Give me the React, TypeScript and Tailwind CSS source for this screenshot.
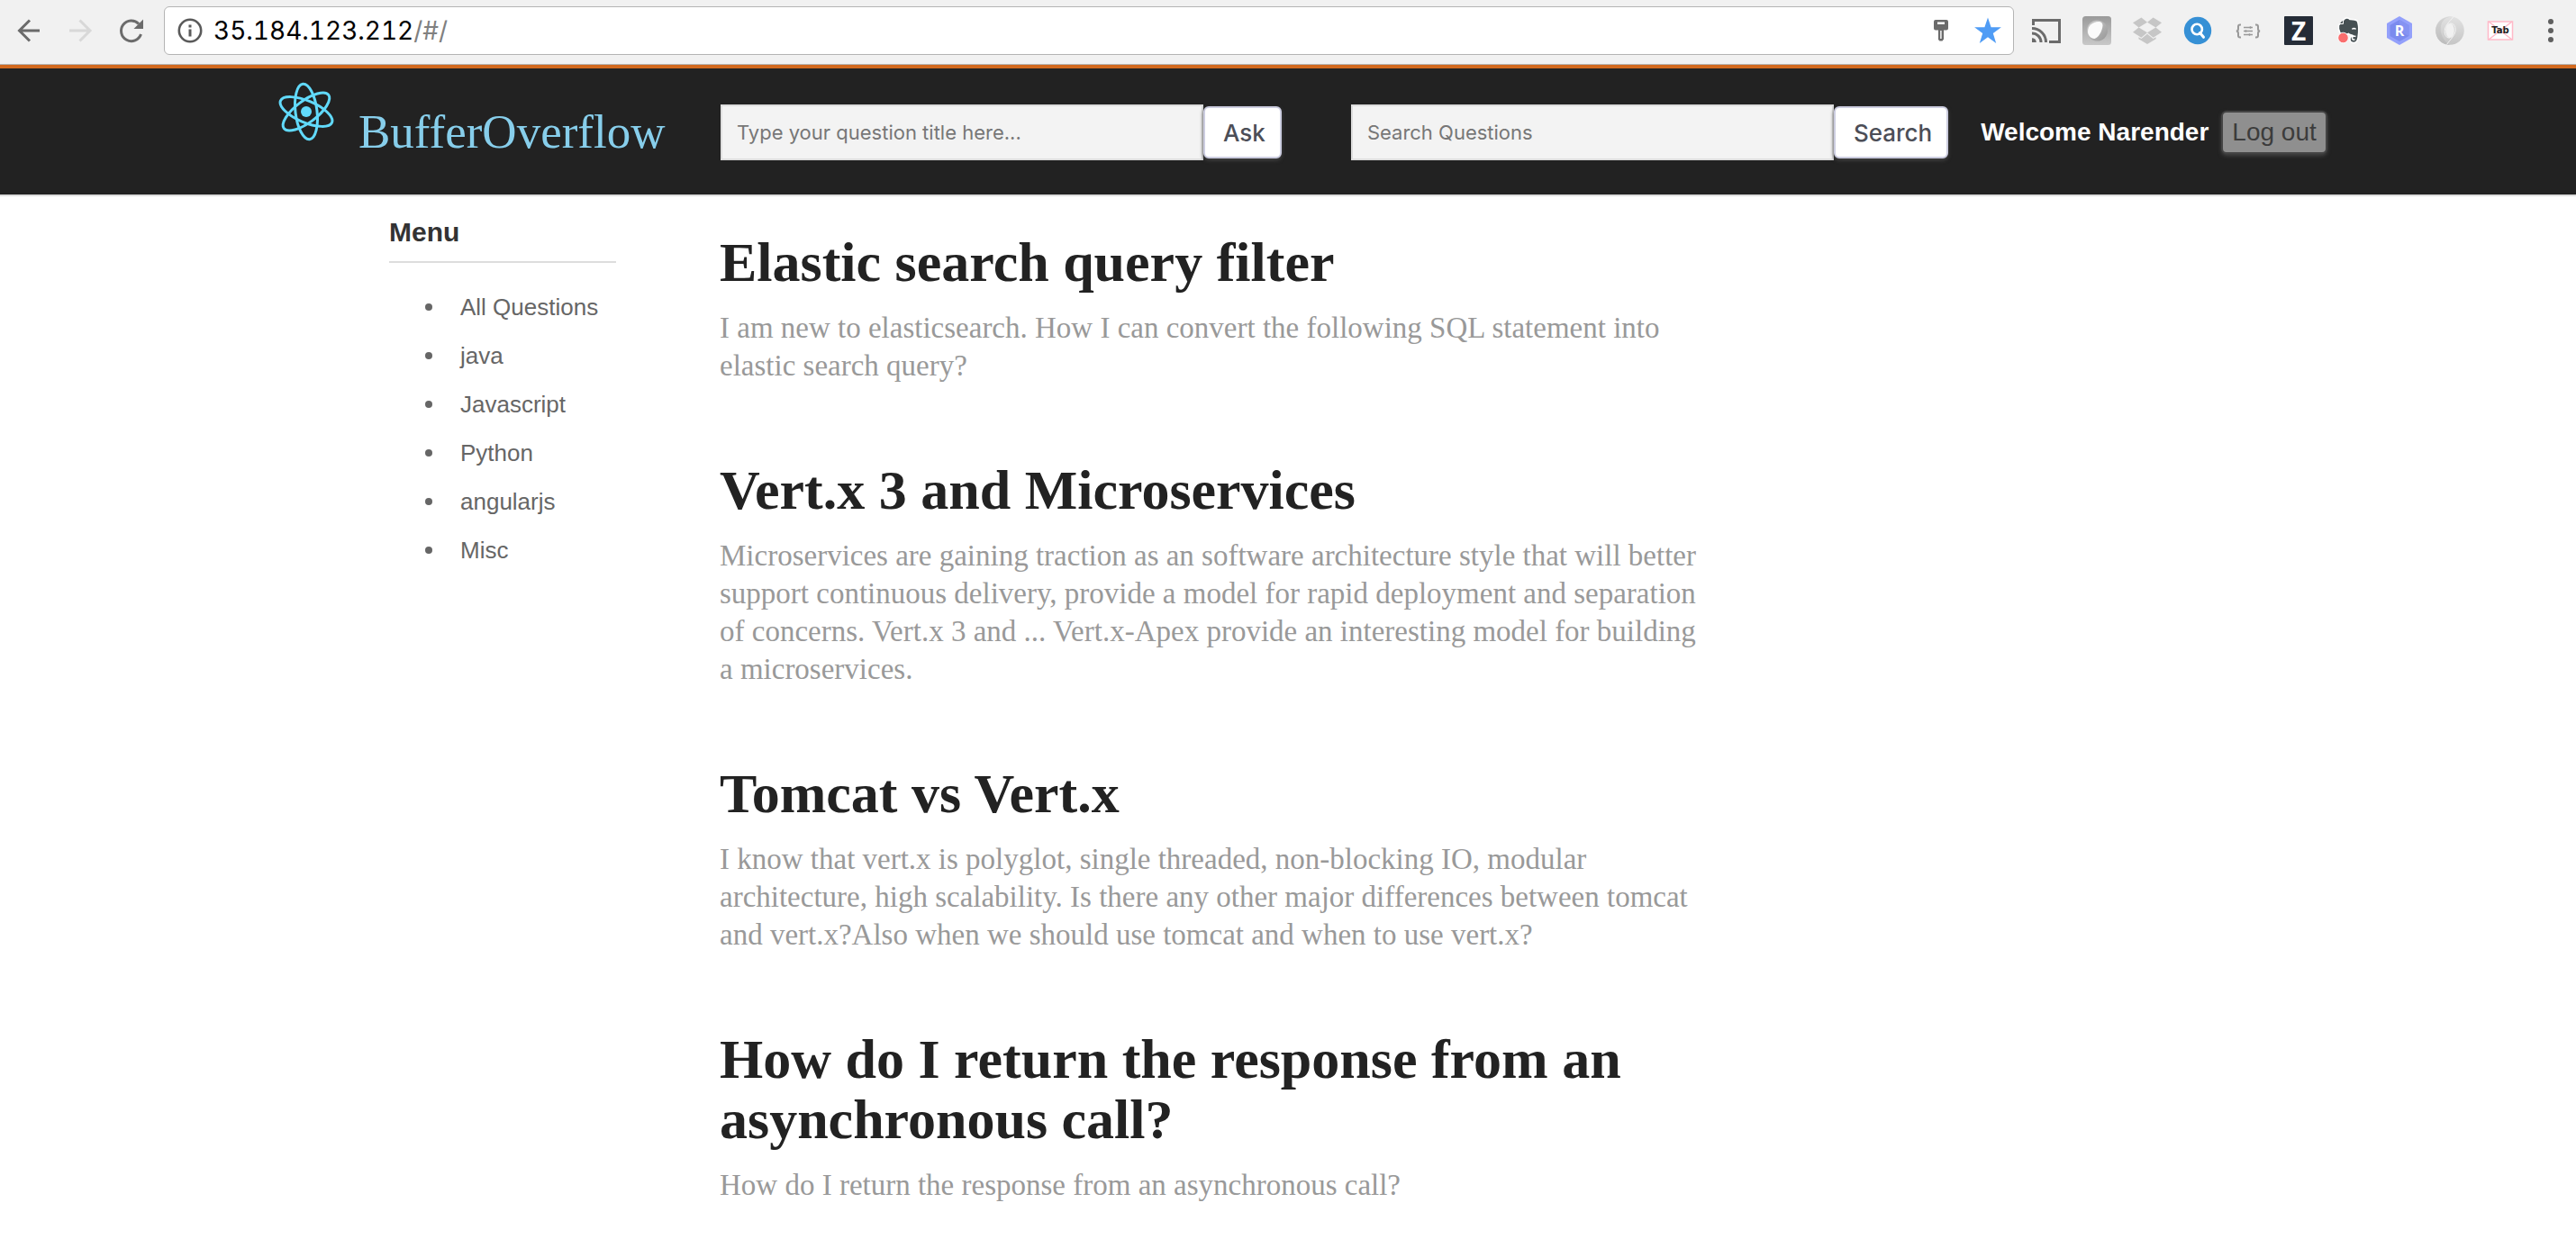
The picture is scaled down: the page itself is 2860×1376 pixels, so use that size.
import React from "react";

const questions = [
  {
    title: "Elastic search query filter",
    body: "I am new to elasticsearch. How I can convert the following SQL statement into elastic search query?",
  },
  {
    title: "Vert.x 3 and Microservices",
    body: "Microservices are gaining traction as an software architecture style that will better support continuous delivery, provide a model for rapid deployment and separation of concerns. Vert.x 3 and ... Vert.x-Apex provide an interesting model for building a microservices.",
  },
  {
    title: "Tomcat vs Vert.x",
    body: "I know that vert.x is polyglot, single threaded, non-blocking IO, modular architecture, high scalability. Is there any other major differences between tomcat and vert.x?Also when we should use tomcat and when to use vert.x?",
  },
  {
    title: "How do I return the response from an asynchronous call?",
    body: "How do I return the response from an asynchronous call?",
  },
];

const categories = ["All Questions", "java", "Javascript", "Python", "angularjs", "Misc"];

function BackIcon() {
  return (
    <svg className="size-8" viewBox="0 0 32 32" fill="none" stroke="currentColor" strokeWidth="3">
      <path d="M15 4.500L3.500 16L15 27.500M4 16H26" />
    </svg>
  );
}

function ForwardIcon() {
  return (
    <svg className="size-8" viewBox="0 0 32 32" fill="none" stroke="currentColor" strokeWidth="3">
      <path d="M14.500 4.500L26 16L14.500 27.500M26 16H3" />
    </svg>
  );
}

function ReloadIcon() {
  return (
    <svg className="size-8" viewBox="0 0 32 32">
      <path d="M26.500 20A11.300 11.300 0 1 1 24 8.500" fill="none" stroke="currentColor" strokeWidth="3" />
      <path d="M29 3.500V14H18.500Z" fill="currentColor" />
    </svg>
  );
}

function InfoIcon() {
  return (
    <svg className="size-7 text-[#5a5a5a]" viewBox="0 0 28 28">
      <circle cx="14" cy="14" r="12.200" fill="none" stroke="currentColor" strokeWidth="2.600" />
      <path d="M12.500 12.500h3v8h-3zM12.500 7.500h3v3h-3z" fill="currentColor" />
    </svg>
  );
}

function KeyIcon() {
  return (
    <svg className="size-8" viewBox="0 0 32 32">
      <path
        fillRule="evenodd"
        fill="#6b6b6b"
        d="M10 4h12a2 2 0 0 1 2 2v7.500a2 2 0 0 1-2 2h-3V25.500l-1.500 2h-3L13 26V15.500h-3a2 2 0 0 1-2-2V6a2 2 0 0 1 2-2zM12 6.500v2.500h8V6.500zM15.200 16v9h1.400v-9z"
      />
    </svg>
  );
}

function StarIcon() {
  return (
    <svg className="size-8" viewBox="0 0 32 32" fill="#4f9cf5">
      <path d="M16 1.500l3.600 10.700h11.300l-9.100 6.800 3.400 11L16 23.300 6.800 30l3.400-11L1.100 12.200h11.300z" />
    </svg>
  );
}

function CastIcon() {
  return (
    <svg className="size-8" viewBox="0 0 32 32" fill="none" stroke="#6b6b6b" strokeWidth="3">
      <path d="M1.500 10V4.500h29v24H19" />
      <path d="M0 13.500A15.500 15.500 0 0 1 15.500 29M0 19A10 10 0 0 1 10 29" />
      <path d="M0 24.200A4.800 4.800 0 0 1 4.800 29H0z" fill="#6b6b6b" stroke="none" />
    </svg>
  );
}

function PebbleIcon() {
  return (
    <svg className="size-8" viewBox="0 0 32 32">
      <defs>
        <linearGradient id="pebble-tile" x1="0" y1="0" x2="0" y2="1">
          <stop offset="0" stopColor="#9a9a9a" />
          <stop offset="1" stopColor="#c8c8c8" />
        </linearGradient>
        <linearGradient id="pebble-disc" x1="0" y1="0" x2="1" y2="1">
          <stop offset="0" stopColor="#cfcfcf" />
          <stop offset="1" stopColor="#969696" />
        </linearGradient>
      </defs>
      <rect width="32" height="32" rx="3.500" fill="url(#pebble-tile)" />
      <circle cx="16.500" cy="16" r="11.500" fill="url(#pebble-disc)" />
      <path d="M6 17C6 10.500 11 6.500 18 6c3 0 4.500 1.500 4.500 4.500C22 17 17.500 24 13.500 25 9 25 6 21 6 17z" fill="#fbfbfb" />
    </svg>
  );
}

function DropboxIcon() {
  return (
    <svg className="size-8" viewBox="0 0 32 32" fill="#c6c6c6">
      <path d="M9.400 1.500L16 6.800 6.600 12.500 0 7.300zM22.600 1.500L32 7.300l-6.600 5.200L16 6.800zM0 17.800l6.600-5.300L16 18.300l-6.600 5.400zM32 17.800l-6.600-5.300L16 18.300l6.600 5.400zM16 19.800l6.600 5.300 3-1.900v2L16 31l-9.600-5.800v-2l3 1.900z" />
    </svg>
  );
}

function SearchDiscIcon() {
  return (
    <svg className="size-8" viewBox="0 0 32 32">
      <circle cx="16" cy="16" r="15.200" fill="#3690d5" />
      <circle cx="15.200" cy="14.500" r="5.700" fill="none" stroke="#fff" strokeWidth="2.600" />
      <path d="M18.500 18.500l4 4.800" stroke="#fff" strokeWidth="3" strokeLinecap="round" />
    </svg>
  );
}

function BracesIcon() {
  return (
    <svg className="size-8" viewBox="0 0 32 32" fill="none" stroke="#999" strokeWidth="2">
      <path d="M8 9.500H7c-1.500 0-2 .7-2 2v2.500c0 1.700-.7 2.500-2.200 2.500C4.300 16.500 5 17.300 5 19v2.500c0 1.300.5 2 2 2h1" />
      <path d="M24 9.500h1c1.500 0 2 .7 2 2v2.500c0 1.700.7 2.500 2.200 2.500-1.500 0-2.200.8-2.200 2.500v2.500c0 1.300-.5 2-2 2h-1" />
      <path d="M11 12.500h10M11 16.500h10M11 20.500h10" strokeWidth="1.500" />
      <path d="M18.500 11.200v2.600M13.500 15.200v2.600M17.500 19.200v2.600" strokeWidth="1.400" />
    </svg>
  );
}

function ZIcon() {
  return (
    <span className="block size-8 rounded-[1px] bg-[#252c37] text-center font-['Open_Sans'] text-[28px] leading-8 font-bold text-white">
      Z
    </span>
  );
}

function ElephantIcon() {
  return (
    <svg className="size-8" viewBox="0 0 32 32">
      <path
        d="M11 3c2-2 5-1 6 .5 3 .2 6 .3 8 1.500 2 3 2.200 12 1 19-.7 4-2 5.500-4.500 5.500-3.500 0-4.500-1.500-4.500-4s1.500-3.500 4-3.500c-2-1.500-4.500-1-5.500-2.500-3 1.500-8 1-9.500-1C4.500 16 4 13 4.500 10z"
        fill="#465053"
        stroke="#fff"
        strokeWidth="1.500"
      />
      <path d="M5 8.500h4.500V3.500z" fill="#465053" stroke="#fff" strokeWidth="1" />
      <path d="M19.500 14.500c1-1.500 3-1.500 4 0M23.500 22.500c-2-.8-4 0-4 1.800s1.500 2 3 1.700" fill="none" stroke="#fff" strokeWidth="1.500" />
      <circle cx="9.500" cy="24" r="5.800" fill="#fa6e6e" stroke="#fff" strokeWidth="1" />
    </svg>
  );
}

function HexIcon() {
  return (
    <div className="relative size-8">
      <svg className="size-8" viewBox="0 0 32 32">
        <path d="M16 0l14 8v16l-14 8L2 24V8z" fill="#93a0fb" />
        <path d="M16 4l10.500 6v12L16 28 5.500 22V10z" fill="#7b8bee" />
        <path d="M16 4l10.500 6v12L16 16z" fill="#8593f2" />
      </svg>
      <span className="absolute inset-0 text-center font-['Open_Sans'] text-base leading-8 font-bold text-white">R</span>
    </div>
  );
}

function RingIcon() {
  return (
    <svg className="size-8" viewBox="0 0 32 32">
      <defs>
        <linearGradient id="ring-a" x1="0" y1="0" x2="0" y2="1">
          <stop offset="0" stopColor="#d4d4d4" />
          <stop offset="1" stopColor="#bcbcbc" />
        </linearGradient>
        <linearGradient id="ring-b" x1="0" y1="0" x2="0" y2="1">
          <stop offset="0" stopColor="#e2e2e2" />
          <stop offset="1" stopColor="#c6c6c6" />
        </linearGradient>
      </defs>
      <circle cx="16" cy="16" r="15.800" fill="url(#ring-b)" />
      <path d="M19 .5C8 .5 5 9 6 17c1 7 5 12 10 14.800C7 32 .2 25 .2 16S8 0 19 .5z" fill="url(#ring-a)" />
      <path d="M16 8c6-1 9 8 3 15-2 3-5 6-6.500 8.500M16 24c-6 1-8-9-3-15 2-3 4.500-5 7-8.500" fill="none" stroke="#f3f3f3" strokeWidth="1" />
      <ellipse cx="16" cy="16" rx="4.800" ry="8" fill="#f1f1f1" />
    </svg>
  );
}

function TabIcon() {
  return (
    <div className="relative size-8">
      <svg className="size-8" viewBox="0 0 32 32" fill="none" stroke="#ffb9c8" strokeWidth="1.500">
        <rect x="2.500" y="6" width="27" height="20" fill="#fff" />
        <path d="M3 6l26 20M29 6L3 26" />
      </svg>
      <span className="absolute inset-0 text-center font-['DejaVu_Sans'] text-[10px] leading-8 font-bold text-[#222]">Tab</span>
    </div>
  );
}

function DotsIcon() {
  return (
    <svg className="size-8" viewBox="0 0 32 32" fill="#5f5f5f">
      <circle cx="16" cy="6" r="3" />
      <circle cx="16" cy="16" r="3" />
      <circle cx="16" cy="26" r="3" />
    </svg>
  );
}

function AtomLogo() {
  return (
    <svg className="h-[68px] w-16" viewBox="-32 -34 64 68" fill="none" stroke="#61dafb" strokeWidth="3">
      <circle r="6" fill="#61dafb" stroke="none" />
      <g transform="rotate(-7)">
        <ellipse rx="12" ry="31" />
        <ellipse rx="12" ry="31" transform="rotate(60)" />
        <ellipse rx="12" ry="31" transform="rotate(120)" />
      </g>
    </svg>
  );
}

const extensions = [
  { label: "Cast", icon: <CastIcon /> },
  { label: "Pebble", icon: <PebbleIcon /> },
  { label: "Dropbox", icon: <DropboxIcon /> },
  { label: "Search tool", icon: <SearchDiscIcon /> },
  { label: "JSON tool", icon: <BracesIcon /> },
  { label: "Z", icon: <ZIcon /> },
  { label: "Web clipper", icon: <ElephantIcon /> },
  { label: "R", icon: <HexIcon /> },
  { label: "JSON viewer", icon: <RingIcon /> },
  { label: "Tab", icon: <TabIcon /> },
  { label: "Browser menu", icon: <DotsIcon /> },
];

function BrowserBar() {
  return (
    <div className="flex h-[72px] items-center border-b border-[#b4b4b4] bg-[#f1f1f1] pr-3 pb-1 pl-[18px]">
      <div className="flex gap-6 text-[#6b6b6b]">
        <button type="button" aria-label="Back"><BackIcon /></button>
        <button type="button" aria-label="Forward" className="text-[#d8d8d8]"><ForwardIcon /></button>
        <button type="button" aria-label="Reload"><ReloadIcon /></button>
      </div>
      <div className="ml-5 flex h-[54px] flex-1 items-center gap-5 rounded-md border border-[#b4b4b4] bg-white pr-3 pl-[14px]">
        <div className="flex flex-1 items-center gap-3 font-['Inter',sans-serif] text-[28px] leading-9 tabular-nums">
          <InfoIcon />
          <div className="text-black">
            35.184.123.212<span className="text-[#808080]">/#/</span>
          </div>
        </div>
        <button type="button" aria-label="Saved password"><KeyIcon /></button>
        <button type="button" aria-label="Bookmark"><StarIcon /></button>
      </div>
      <div className="ml-5 flex gap-6">
        {extensions.map((e) => (
          <button key={e.label} type="button" aria-label={e.label}>{e.icon}</button>
        ))}
      </div>
    </div>
  );
}

function HeaderForm({ label, action }: { label: string; action: string }) {
  return (
    <form className="flex items-center font-['Inter',sans-serif]" onSubmit={(e) => e.preventDefault()}>
      <input
        type="text"
        aria-label={label}
        placeholder={label}
        className="h-[62px] w-[536px] border-2 border-[#ddd] bg-[#f3f3f3] px-4 text-[22px] text-[#333] placeholder:text-[#777]"
      />
      <button
        type="submit"
        className="h-[58px] rounded-md border-2 border-[#cccde0] bg-white pr-4 pl-5 text-[26px] font-medium text-[#4c4e57] shadow-[0_2px_4px_#444]"
      >
        {action}
      </button>
    </form>
  );
}

function SiteHeader() {
  return (
    <header className="flex h-[146px] items-center border-t-4 border-b-2 border-t-[#d2691e] border-b-[#ddd] bg-[#222] pt-0.5 pl-[308px]">
      <a href="#/" className="flex w-[492px] gap-[26px] self-start pt-3">
        <AtomLogo />
        <span className="pt-6 font-['Liberation_Serif',serif] text-[53px] leading-[64px] text-[#87ceeb]">BufferOverflow</span>
      </a>
      <HeaderForm label="Type your question title here..." action="Ask" />
      <div className="w-[77px]" />
      <HeaderForm label="Search Questions" action="Search" />
      <div className="ml-9 flex items-center gap-[14px] font-['Liberation_Sans',sans-serif]">
        <span className="text-[28px] font-bold text-white">Welcome Narender</span>
        <button
          type="button"
          className="h-12 rounded-md border-2 border-[#444] bg-[#8f8f8f] px-2.5 text-[28px] leading-9 text-[#3c3c3c] shadow-[0_2px_4px_#444]"
        >
          Log out
        </button>
      </div>
    </header>
  );
}

function Sidebar() {
  return (
    <nav aria-label="Menu" className="w-[252px] font-['Liberation_Sans',sans-serif]">
      <h2 className="border-b-2 border-[#ddd] pt-[22px] pb-[14px] text-[30px] leading-9 font-bold text-[#333]">Menu</h2>
      <ul className="pt-[22px] pl-10 text-[26px] leading-[54px] text-[#666]">
        {categories.map((c) => (
          <li key={c} className="flex items-center gap-[31px]">
            <span className="size-2 rounded-full bg-[#666]" />
            <a href="#/">{c}</a>
          </li>
        ))}
      </ul>
    </nav>
  );
}

export default function App() {
  return (
    <div className="bg-white">
      <BrowserBar />
      <SiteHeader />
      <div className="flex pl-[432px]">
        <Sidebar />
        <main className="ml-[115px] flex w-[1106px] flex-col gap-[84px] pt-10 font-['Liberation_Serif',serif]">
          {questions.map((q) => (
            <article key={q.title}>
              <h2 className="pb-[18px] text-[62px] leading-[67px] font-bold text-[#222]">
                <a href="#/">{q.title}</a>
              </h2>
              <p className="text-[33px] leading-[42px] text-[#999]">{q.body}</p>
            </article>
          ))}
        </main>
      </div>
    </div>
  );
}
